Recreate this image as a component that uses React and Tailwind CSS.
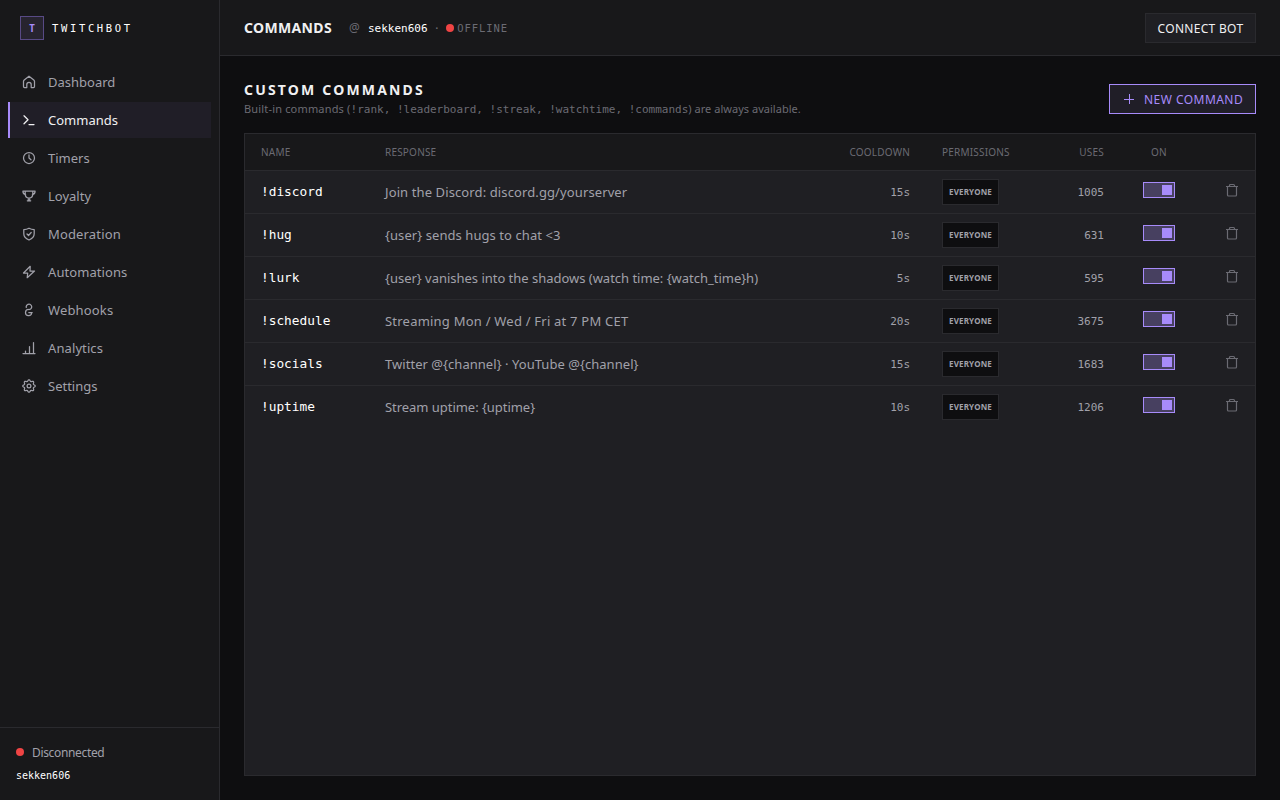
import React, { useState } from 'react';

const NAV_ITEMS = [
  { id: 'dashboard', label: 'Dashboard' },
  { id: 'commands', label: 'Commands' },
  { id: 'timers', label: 'Timers' },
  { id: 'loyalty', label: 'Loyalty' },
  { id: 'moderation', label: 'Moderation', className: 'tracking-[0.15px]' },
  { id: 'automations', label: 'Automations', className: 'tracking-[0.08px]' },
  { id: 'webhooks', label: 'Webhooks', className: 'tracking-[0.15px]' },
  { id: 'analytics', label: 'Analytics', className: 'tracking-[0.1px]' },
  { id: 'settings', label: 'Settings' },
];

const COMMANDS = [
  { name: '!discord', response: 'Join the Discord: discord.gg/yourserver', cooldown: 15, uses: 1005, className: 'tracking-[0.11px]' },
  { name: '!hug', response: '{user} sends hugs to chat <3', cooldown: 10, uses: 631, className: 'tracking-[0.07px]' },
  { name: '!lurk', response: '{user} vanishes into the shadows (watch time: {watch_time}h)', cooldown: 5, uses: 595, className: 'tracking-[-0.02px]' },
  { name: '!schedule', response: 'Streaming Mon / Wed / Fri at 7 PM CET', cooldown: 20, uses: 3675, className: 'tracking-[0.22px]' },
  { name: '!socials', response: 'Twitter @{channel} · YouTube @{channel}', cooldown: 15, uses: 1683, className: 'tracking-[0.04px]' },
  { name: '!uptime', response: 'Stream uptime: {uptime}', cooldown: 10, uses: 1206, className: 'tracking-[-0.04px]' },
];

// Eight rounded teeth around the centre of a 16px box
const gearPath = () => {
  const points = [];
  for (let i = 0; i < 96; i++) {
    const angle = (i / 96) * Math.PI * 2;
    const radius = 5.5 + 0.75 * Math.cos(angle * 8);
    points.push(`${(8 + radius * Math.cos(angle)).toFixed(2)} ${(8 + radius * Math.sin(angle)).toFixed(2)}`);
  }
  return `M${points.join('L')}z`;
};

const ICONS = {
  dashboard: <path d="M3.200 6 8 2.200 12.800 6c.400.400.700.800.700 1.300v5.200q0 1-1 1H10.200V10.500a2.200 2.200 0 0 0-4.400 0v3H3.500q-1 0-1-1V7.300c0-.500.300-.900.700-1.300z" />,
  commands: <path d="m3 3.800 4 4-4 4M8 12.500h5" />,
  timers: <><circle cx="8" cy="8" r="5.500" /><path d="M8 4.800V8l2 1.800" /></>,
  loyalty: <path d="M4.200 3h7.600v2.700c0 2.700-1.600 4.300-3.800 4.300S4.200 8.400 4.200 5.700zM4.200 3H1.900c0 2.200 1 3.400 2.700 3.700M11.800 3h2.300c0 2.200-1 3.400-2.700 3.700M7.300 10v2.500M8.700 10v2.500M6.300 12.800h3.400" />,
  moderation: <path d="M8 2.200c1.700 1 3.300 1.400 5.200 1.400v4.200c0 3-2 4.900-5.200 6.200-3.200-1.300-5.200-3.200-5.200-6.200V3.600c1.900 0 3.500-.4 5.200-1.400zM6 8l1.500 1.500 2.700-3" />,
  automations: <path d="M9.200 2.300 2.500 9h4.200l-.5 4.700L13.500 7H9z" />,
  webhooks: <path d="M5.300 5.500a2.700 2.700 0 1 1 4.300 1.500c-.6.400-1.100.5-1.900.5a3.100 3.100 0 1 0 3 3.300M7.800 10.500h3.400" />,
  analytics: <path d="M2 13.500h12M4.500 13.500v-2.500M8.500 13.500V6.500M12.500 13.500v-11" />,
  settings: <><path d={gearPath()} /><circle cx="8" cy="8" r="1.900" /></>,
};

const Icon = ({ name }) => (
  <svg width="14" height="14" viewBox="1 1 14 14" fill="none" stroke="currentColor" strokeWidth="1.25" strokeLinecap="round" strokeLinejoin="round" className="shrink-0">
    {ICONS[name]}
  </svg>
);

const TrashIcon = () => (
  <svg width="14" height="14" viewBox="0 0 14 14" fill="none" stroke="currentColor" strokeWidth="1.2" strokeLinejoin="round">
    <path d="M1 3.500h12M4.500 3.500v-1q0-1 1-1h3q1 0 1 1v1M2.500 3.500v8.500q0 1 1 1h7q1 0 1-1V3.500" />
  </svg>
);

const Sidebar = ({ active, onSelect }) => (
  <aside className="flex w-[220px] shrink-0 flex-col border-r border-[#2a2a2e] bg-[#18181a]">
    <div className="flex h-14 items-center gap-2 px-5">
      <div className="flex size-6 items-center justify-center border border-[#584a85] bg-[#27242f] pt-px font-['DejaVu_Sans_Mono',monospace] text-[10px] font-bold text-[#a78bfa]">T</div>
      <span className="pt-0.5 font-['DejaVu_Sans_Mono',monospace] text-[10.5px] tracking-[2.65px] text-white">TWITCHBOT</span>
    </div>
    <nav className="flex flex-1 flex-col gap-0.5 px-2 pt-2">
      {NAV_ITEMS.map((item) => (
        <button
          key={item.id}
          onClick={() => onSelect(item.id)}
          className={`flex h-9 items-center gap-3 border-l-2 pl-3 text-left text-[13px] ${
            active === item.id
              ? 'border-[#a78bfa] bg-[#201e27] text-[#f0f0f2]'
              : 'border-transparent text-[#a1a1aa]'
          }`}
        >
          <Icon name={item.id} />
          <span className={`pt-0.5 ${item.className || ''}`}>{item.label}</span>
        </button>
      ))}
    </nav>
    <div className="flex h-[73px] flex-col border-t border-[#2a2a2e] px-4 pt-4">
      <div className="flex items-center gap-2 text-xs leading-[18px] tracking-[-0.34px] text-[#a1a1aa]">
        <span className="mb-0.5 size-2 rounded-full bg-[#ef4444]" />
        Disconnected
      </div>
      <span className="mt-1.5 font-['DejaVu_Sans_Mono',monospace] text-[10px] leading-4 text-white">sekken606</span>
    </div>
  </aside>
);

const Toggle = () => (
  <button className="mx-auto flex h-4 w-8 items-center justify-end border border-[#a78bfa] bg-[#474060] pr-0.5">
    <span className="size-2.5 bg-[#a78bfa]" />
  </button>
);

const App = () => {
  const [active, setActive] = useState('commands');

  return (
    <div className="flex h-screen w-screen overflow-hidden bg-[#0e0e10] font-['Noto_Sans',sans-serif]">
      <Sidebar active={active} onSelect={setActive} />
      <div className="flex min-w-0 flex-1 flex-col">
        <header className="flex h-14 items-center border-b border-[#2a2a2e] bg-[#18181a] px-6">
          <h1 className="w-[89px] text-sm font-bold tracking-[0.35px] text-[#f0f0f2]">COMMANDS</h1>
          <div className="ml-4 flex items-center font-['DejaVu_Sans_Mono',monospace] text-[11px] text-[#6b6b73]">
            <span className="w-[19px] pt-px font-['Noto_Sans',sans-serif] text-xs">@</span>
            <span className="pt-[3px] text-white">sekken606</span>
            <span className="ml-1.5 pt-[3px]">·</span>
            <span className="ml-1.5 size-2 rounded-full bg-[#ef4444]" />
            <span className="ml-[3px] pt-0.5 text-[10.5px] tracking-[0.95px]">OFFLINE</span>
          </div>
          <button className="ml-auto h-[30px] w-[111px] border border-[#2a2a2e] bg-[#1f1f23] pt-0.5 text-xs tracking-[0.3px] text-[#f0f0f2]">CONNECT BOT</button>
        </header>

        <main className="flex flex-1 flex-col px-6 pt-6 pb-6">
          <div className="flex h-[53px] justify-between">
            <div>
              <h2 className="text-sm leading-5 font-bold tracking-[2.18px] text-[#f0f0f2]">CUSTOM COMMANDS</h2>
              <p className="text-[11px] leading-[18px] tracking-[0.03px] text-[#6b6b73]">
                <span className="tracking-[0.17px]">Built-in commands (</span>
                <span className="font-['DejaVu_Sans_Mono',monospace] tracking-normal">!rank, !leaderboard, !streak, !watchtime, !commands</span>) are always available.
              </p>
            </div>
            <button className="mt-1 flex h-[30px] w-[147px] items-center gap-[9px] border border-[#a78bfa] bg-[#201e27] pl-[13px] text-xs tracking-[0.46px] text-[#a78bfa]">
              <svg width="12" height="12" viewBox="0 0 12 12" stroke="currentColor"><path d="M1 6.500h10M6.500 1v10" /></svg>
              <span className="pt-0.5">NEW COMMAND</span>
            </button>
          </div>

          <div className="flex-1 border border-[#2a2a2e] bg-[#1f1f23]">
            <table className="w-full table-fixed border-collapse">
              <colgroup>
                <col className="w-[124px]" />
                <col />
                <col className="w-24" />
                <col className="w-[104px]" />
                <col className="w-[90px]" />
                <col className="w-[78px]" />
                <col className="w-[57px]" />
              </colgroup>
              <thead>
                <tr className="h-9 border-b border-[#2a2a2e] bg-[#18181a] text-left text-[10px] tracking-[0.2px] text-[#6b6b73] [&>th]:pt-px [&>th]:font-normal">
                  <th className="pl-4">NAME</th>
                  <th className="pl-4">RESPONSE</th>
                  <th className="pr-4 text-right">COOLDOWN</th>
                  <th className="pl-4">PERMISSIONS</th>
                  <th className="pr-4 text-right">USES</th>
                  <th className="text-center">ON</th>
                  <th />
                </tr>
              </thead>
              <tbody>
                {COMMANDS.map((command) => (
                  <tr key={command.name} className="h-[43px] border-b border-[#2a2a2e] text-[13px] text-[#a1a1aa] last:border-0">
                    <td className="pl-4 font-['DejaVu_Sans_Mono',monospace] text-[12.8px] text-white">{command.name}</td>
                    <td className={`pt-0.5 pl-4 ${command.className}`}>{command.response}</td>
                    <td className="pt-[3px] pr-4 text-right font-['DejaVu_Sans_Mono',monospace] text-[11px]">{command.cooldown}s</td>
                    <td className="pl-4">
                      <span className="flex h-[26px] w-[57px] items-center justify-center border border-[#2a2a2e] bg-[#0e0e10] text-[8px] font-bold tracking-[0.18px]">EVERYONE</span>
                    </td>
                    <td className="pt-[3px] pr-4 text-right font-['DejaVu_Sans_Mono',monospace] text-[11px]">{command.uses}</td>
                    <td className="pb-1"><Toggle /></td>
                    <td className="pb-1 pl-[27px] text-[#6b6b73]"><TrashIcon /></td>
                  </tr>
                ))}
              </tbody>
            </table>
          </div>
        </main>
      </div>
    </div>
  );
};

export default App;
